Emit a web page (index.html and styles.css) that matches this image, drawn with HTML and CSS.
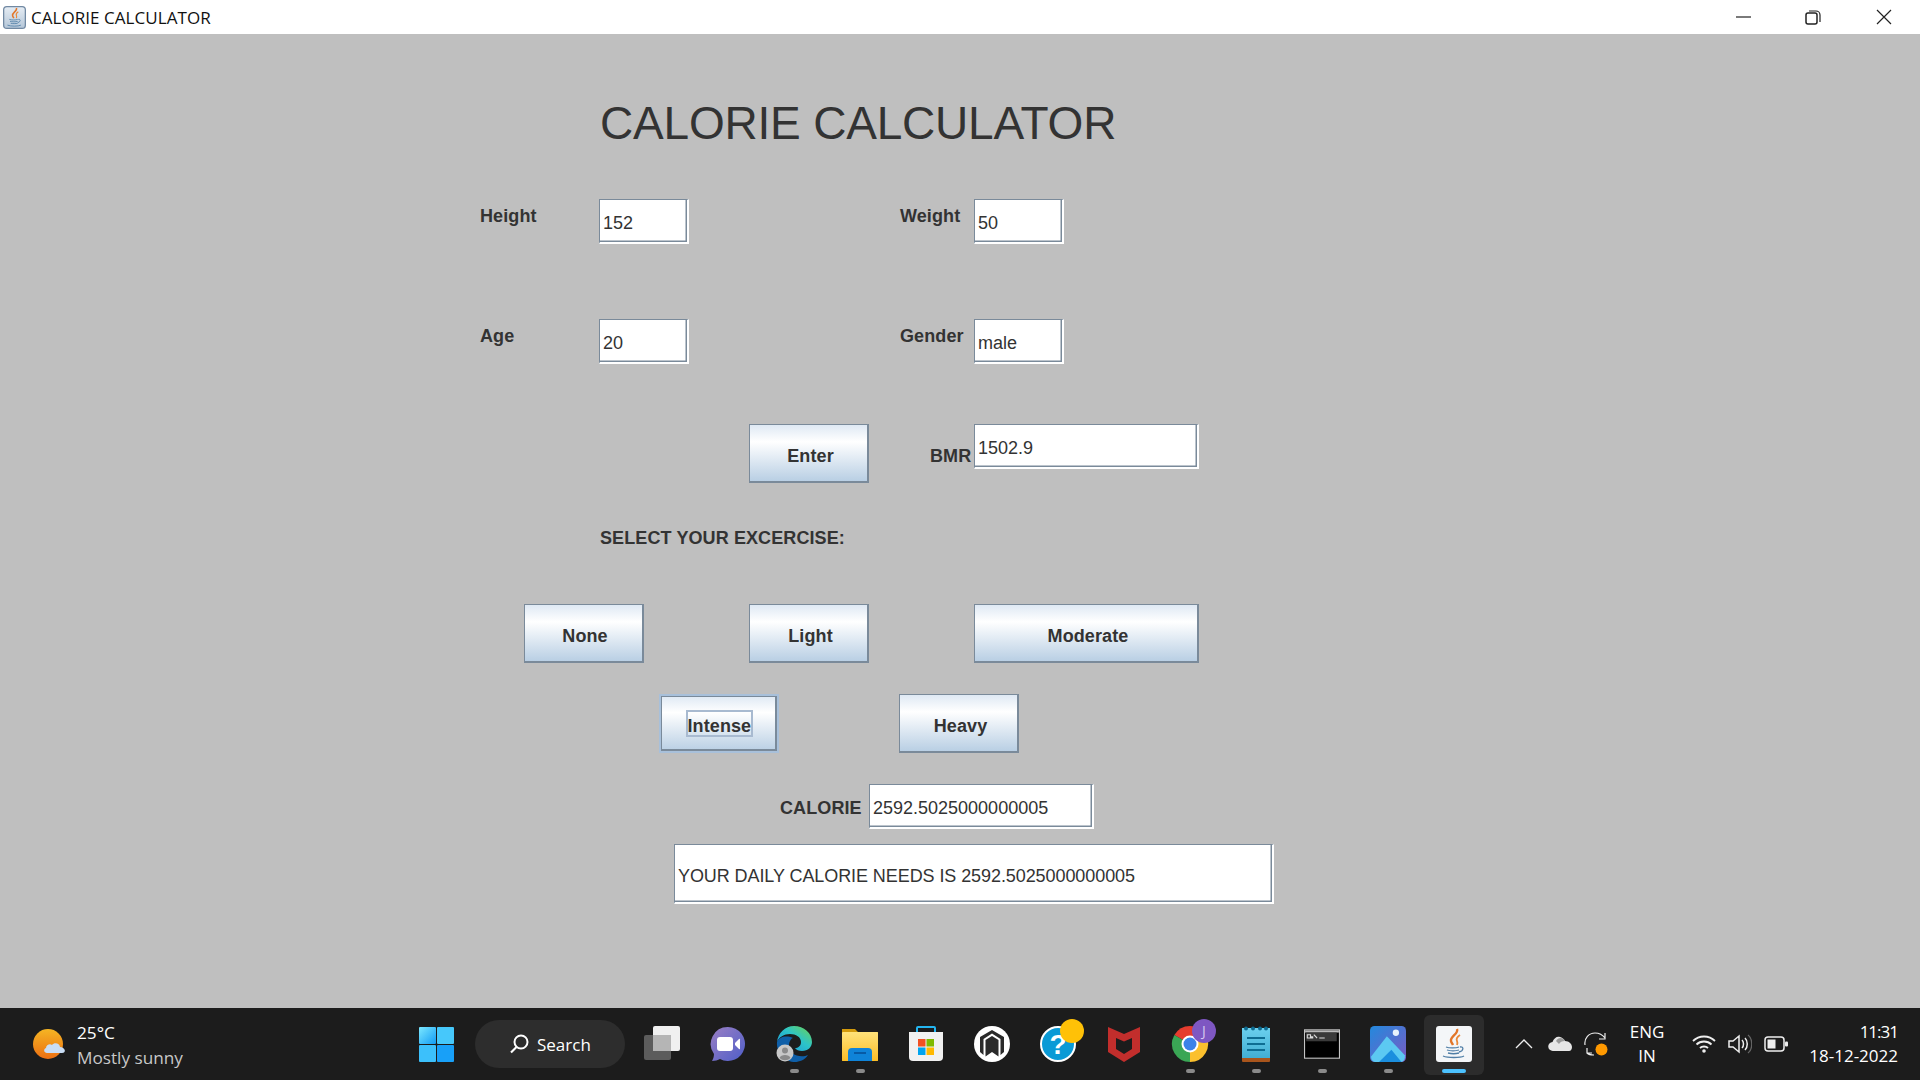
FILE: index.html
```html
<!DOCTYPE html>
<html lang="en">
    <head>
        <meta charset="utf-8">
        <meta name="viewport" content="width=device-width, initial-scale=1.0">
        <title>CALORIE CALCULATOR</title>
        <link rel="stylesheet" href="styles.css">
    </head>
    <body>
        <svg class="defs" width="0" height="0">
            <defs>
                <symbol id="java-mark" viewBox="0 0 36 36">
                    <path d="M21 3c2 5-7 7-6 12 .3 1.500 1.200 2.500 2 4" fill="none" stroke="#e2762a" stroke-width="2.400"/>
                    <path d="M24 9c-3 2-4 4-3 6 .5 1 .6 2 0 4" fill="none" stroke="#ea8a3c" stroke-width="1.800"/>
                    <path d="M10 21c3 1.200 10 1.200 13 0M11 24c3 1 9 1 12 0M12 27c3 .8 8 .8 11 0M7 30c5 2 17 2 21 0M24 21c4-1 4 4-1 5" fill="none" stroke="#4f7ea6" stroke-width="1.300"/>
                </symbol>
                <linearGradient id="sunGrad" x1="0" y1="0" x2="0" y2="1"><stop offset="0" stop-color="#f5b524"/><stop offset="1" stop-color="#ec6f12"/></linearGradient>
                <linearGradient id="logoGrad" x1="0" y1="0" x2="1" y2="1"><stop offset="0" stop-color="#7ce8ff"/><stop offset="1" stop-color="#129cf5"/></linearGradient>
                <linearGradient id="edgeTop" x1="0" y1="1" x2="1" y2="0"><stop offset="0" stop-color="#1b8fd6"/><stop offset="0.55" stop-color="#2cc4c9"/><stop offset="1" stop-color="#6fd34f"/></linearGradient>
                <linearGradient id="folderGrad" x1="0" y1="0" x2="0" y2="1"><stop offset="0" stop-color="#ffe27a"/><stop offset="1" stop-color="#fbbd27"/></linearGradient>
                <linearGradient id="meetGrad" x1="0" y1="0" x2="1" y2="1"><stop offset="0" stop-color="#9a7fc4"/><stop offset="1" stop-color="#4f5ec8"/></linearGradient>
                <linearGradient id="noteGrad" x1="0" y1="0" x2="0" y2="1"><stop offset="0" stop-color="#6bd0ee"/><stop offset="1" stop-color="#42aed2"/></linearGradient>
                <linearGradient id="photoGrad" x1="0" y1="0" x2="1" y2="1"><stop offset="0" stop-color="#2389dd"/><stop offset="1" stop-color="#7a5bc4"/></linearGradient>
                <linearGradient id="tileGrad" x1="0" y1="0" x2="0" y2="1"><stop offset="0" stop-color="#e6edf4"/><stop offset="1" stop-color="#b4c6d8"/></linearGradient>
            </defs>
        </svg>
        <div id="wrapper">
            <header class="titlebar">
                <svg class="app-icon" viewBox="0 0 36 36">
                    <rect x="1" y="1" width="34" height="34" rx="5" fill="url(#tileGrad)" stroke="#7189a3" stroke-width="2"/>
                    <use href="#java-mark" width="36" height="36"/>
                </svg>
                <span class="app-title">CALORIE CALCULATOR</span>
                <div class="win-controls">
                    <svg class="win-btn win-min" viewBox="0 0 16 16"><path d="M0 8h15" stroke="#222" stroke-width="1.200"/></svg>
                    <svg class="win-btn" viewBox="0 0 16 16"><rect x="1" y="4" width="11" height="11" rx="2" fill="none" stroke="#222" stroke-width="1.500"/><path d="M4 2h7a4 4 0 0 1 4 4v7" fill="none" stroke="#222" stroke-width="1.200"/></svg>
                    <svg class="win-btn" viewBox="0 0 16 16"><path d="M1 1l14 14M15 1L1 15" stroke="#222" stroke-width="1.200"/></svg>
                </div>
            </header>
            <main class="form">
                <h1 class="form-title">CALORIE CALCULATOR</h1>
                <div class="row row-first">
                    <label class="lbl lbl-left">Height</label>
                    <div class="field field-small">152</div>
                    <label class="lbl lbl-right">Weight</label>
                    <div class="field field-small">50</div>
                </div>
                <div class="row row-second">
                    <label class="lbl lbl-left">Age</label>
                    <div class="field field-small">20</div>
                    <label class="lbl lbl-right">Gender</label>
                    <div class="field field-small">male</div>
                </div>
                <div class="row row-enter">
                    <button class="btn btn-std">Enter</button>
                    <label class="lbl lbl-bmr">BMR</label>
                    <div class="field field-wide">1502.9</div>
                </div>
                <div class="select-label">SELECT YOUR EXCERCISE:</div>
                <div class="row row-levels">
                    <button class="btn btn-std btn-none">None</button>
                    <button class="btn btn-std btn-light">Light</button>
                    <button class="btn btn-wide">Moderate</button>
                </div>
                <div class="row row-levels2">
                    <button class="btn btn-focus"><span class="focus-rect">Intense</span></button>
                    <button class="btn btn-std btn-heavy">Heavy</button>
                </div>
                <div class="row row-calorie">
                    <label class="lbl lbl-calorie">CALORIE</label>
                    <div class="field field-calorie">2592.5025000000005</div>
                </div>
                <div class="row row-result">
                    <div class="field field-result">YOUR DAILY CALORIE NEEDS IS 2592.5025000000005</div>
                </div>
            </main>
            <footer class="taskbar">
                <div class="weather">
                    <svg class="weather-icon" viewBox="0 0 34 30">
                        <ellipse cx="15" cy="15" rx="15" ry="15" fill="url(#sunGrad)"/>
                        <path d="M14 24c-3 0-4-4-1-5 0-3 4-5 6-3 2-3 8-2 8 2 5 0 7 6 2 6z" fill="#c9ddf5"/>
                    </svg>
                    <div class="weather-text">
                        <div class="temp">25°C</div>
                        <div class="cond">Mostly sunny</div>
                    </div>
                </div>
                <svg class="start" viewBox="0 0 35 35">
                    <rect width="17" height="17" rx="1" fill="url(#logoGrad)"/>
                    <rect x="18" width="17" height="17" rx="1" fill="#46c8fb"/>
                    <rect y="18" width="17" height="17" rx="1" fill="#3cc0fb"/>
                    <rect x="18" y="18" width="17" height="17" rx="1" fill="#18a0f8"/>
                </svg>
                <div class="search">
                    <svg class="search-icon" viewBox="0 0 20 20"><circle cx="12" cy="8" r="6.500" fill="none" stroke="#fff" stroke-width="2"/><path d="M7.500 13L2 18.500" stroke="#fff" stroke-width="2.200"/></svg>
                    <span>Search</span>
                </div>
                <div class="apps">
                    <div class="app">
                        <svg viewBox="0 0 36 36"><rect x="0" y="9" width="27" height="25" rx="2" fill="#5c5c5c"/><rect x="9" y="0" width="27" height="25" rx="2" fill="#f0f0f0"/><rect x="9" y="9" width="18" height="16" fill="#b5b5b5"/></svg>
                    </div>
                    <div class="app">
                        <svg viewBox="0 0 36 36"><path d="M18 1a17 17 0 1 1-8 32c-2 1-5 2-8 2 1-2 2-4 2-7A17 17 0 0 1 18 1z" fill="url(#meetGrad)"/><rect x="7" y="11" width="16" height="14" rx="3" fill="#fff"/><path d="M25 17l4-4c.7-.6 1-.2 1 .5v9c0 .7-.4 1-1 .5l-4-4z" fill="#fff"/></svg>
                    </div>
                    <div class="app">
                        <svg viewBox="0 0 36 36">
                            <path d="M1 16C2 7 9 0 18 0c10 0 18 7 18 16 0 5-4 9-10 9-3 0-6-1-7-3 3 0 6-2 6-6 0-5-5-8-11-8C8 8 3 11 1 16z" fill="url(#edgeTop)"/>
                            <path d="M1 16C0 28 10 36 19 36c4 0 10-2 13-7-4 2-11 2-16-2-3-3-4-8-2-12 1-2 2-3 3-3C10 9 3 11 1 16z" fill="#0f5fa8"/>
                            <circle cx="9" cy="27" r="8.500" fill="#c8c8c8"/><circle cx="9" cy="24.500" r="3" fill="#8a8a8a"/><path d="M3.500 32c1-4 10-4 11 0a8 8 0 0 1-11 0z" fill="#8a8a8a"/>
                        </svg>
                        <i class="dot"></i>
                    </div>
                    <div class="app">
                        <svg viewBox="0 0 36 36">
                            <path d="M0 3h13l3 3h20v29H0z" fill="#d39a0c"/>
                            <rect y="6" width="36" height="29" rx="1" fill="url(#folderGrad)"/>
                            <path d="M6 35V26a4 4 0 0 1 4-4h16a4 4 0 0 1 4 4v9z" fill="#0f83d8"/>
                            <rect x="12" y="26" width="12" height="2" fill="#075aa5"/>
                        </svg>
                        <i class="dot"></i>
                    </div>
                    <div class="app">
                        <svg viewBox="0 0 36 36">
                            <path d="M9 7V2a1 1 0 0 1 1-1h16a1 1 0 0 1 1 1v5" fill="none" stroke="#23b5f0" stroke-width="2"/>
                            <path d="M1 6h34v25a4 4 0 0 1-4 4H5a4 4 0 0 1-4-4z" fill="#f1f1f1"/>
                            <rect x="10" y="13" width="7.500" height="7.500" fill="#f25022"/><rect x="18.500" y="13" width="7.500" height="7.500" fill="#7fba00"/>
                            <rect x="10" y="21.500" width="7.500" height="7.500" fill="#00a4ef"/><rect x="18.500" y="21.500" width="7.500" height="7.500" fill="#ffb900"/>
                        </svg>
                    </div>
                    <div class="app">
                        <svg viewBox="0 0 36 36">
                            <circle cx="18" cy="18" r="18" fill="#fff"/>
                            <path d="M18 4L6 11v15l3.500 3V13L18 7.500 26.500 13v16l3.500-3V11z" fill="#2a2a2a"/>
                            <path d="M11.500 14L18 10l6.500 4v16.500L18 26l-6.500 4.500z" fill="#2a2a2a"/>
                        </svg>
                    </div>
                    <div class="app">
                        <svg class="svg-over" viewBox="0 0 36 36">
                            <circle cx="18" cy="18" r="17" fill="#0a9ad6" stroke="#fff" stroke-width="2"/>
                            <text x="18" y="28" class="help-mark">?</text>
                            <circle cx="32" cy="5" r="12" fill="#ffc107"/>
                        </svg>
                    </div>
                    <div class="app">
                        <svg viewBox="0 0 32 36"><path d="M0 1l16 7 16-7v25l-16 10L0 26z" fill="#c22e2c"/><path d="M8 12l8 3.500 8-3.500v11l-8 5-8-5z" fill="#1c1c1c"/></svg>
                    </div>
                    <div class="app">
                        <svg class="svg-over" viewBox="0 0 36 36">
                            <path d="M18 18L33.600 9A18 18 0 0 0 2.400 9z" fill="#e53c2e"/>
                            <path d="M18 18L2.400 9A18 18 0 0 0 18 36z" fill="#3aa655"/>
                            <path d="M18 18L18 36A18 18 0 0 0 33.600 9z" fill="#fbc02d"/>
                            <circle cx="18" cy="18" r="8.500" fill="#fff"/><circle cx="18" cy="18" r="6.500" fill="#3b82e8"/>
                            <circle cx="32" cy="5" r="12" fill="#7e57c2"/>
                            <text x="32" y="10" class="badge-letter">J</text>
                        </svg>
                        <i class="dot"></i>
                    </div>
                    <div class="app">
                        <svg viewBox="0 0 28 36">
                            <rect y="2" width="28" height="34" rx="1" fill="#a9551c"/>
                            <rect y="2" width="28" height="30" fill="url(#noteGrad)"/>
                            <circle cx="4" cy="2.500" r="2" fill="#0e6d92"/><circle cx="11" cy="2.500" r="2" fill="#0e6d92"/><circle cx="18" cy="2.500" r="2" fill="#0e6d92"/><circle cx="24" cy="2.500" r="2" fill="#0e6d92"/>
                            <path d="M5 12h18M5 18h18M5 24h18" stroke="#0e6d92" stroke-width="2"/>
                        </svg>
                        <i class="dot"></i>
                    </div>
                    <div class="app">
                        <svg viewBox="0 0 33 27">
                            <rect x="0.500" y="0.500" width="32" height="26" fill="#000" stroke="#c4c4c4"/>
                            <rect x="1" y="1" width="31" height="2" fill="#bbb"/>
                            <rect x="2" y="3" width="28" height="8" fill="#3a3a3a"/>
                            <path d="M3 5h3v3H3zM7 7h1v1H7zM9 5l3 3M14 8h5" stroke="#ddd" stroke-width="1" fill="none"/>
                        </svg>
                        <i class="dot"></i>
                    </div>
                    <div class="app">
                        <svg viewBox="0 0 32 32">
                            <rect width="32" height="32" rx="4" fill="url(#photoGrad)"/>
                            <circle cx="23" cy="6" r="2.800" fill="#e8f2fc"/>
                            <path d="M1 27L15 9l16 17v2a4 4 0 0 1-4 4H5a4 4 0 0 1-4-4z" fill="#5cc9f2"/>
                            <path d="M8 32l11-11 9 11z" fill="#1b8ede"/>
                        </svg>
                        <i class="dot"></i>
                    </div>
                    <div class="app app-active">
                        <svg viewBox="0 0 36 36">
                            <rect width="36" height="36" rx="3" fill="#f4f6f8"/>
                            <use href="#java-mark" width="36" height="36"/>
                        </svg>
                        <i class="dot dot-active"></i>
                    </div>
                </div>
                <div class="tray">
                    <svg class="tray-chevron" viewBox="0 0 18 10"><path d="M1 9l8-8 8 8" fill="none" stroke="#eee" stroke-width="1.300"/></svg>
                    <svg class="tray-cloud" viewBox="0 0 24 16"><path d="M5 15a4.500 4.500 0 0 1-.5-9C6 2 9 0 12 1c2 .5 4 2 5 4 4 0 7 3 7 6 0 2-1 4-3 4z" fill="#e6e6e6"/><path d="M8 5c2-4 7-4 9 0-3 0-5 1-6 3-1-1-2-2-3-3z" fill="#9a9a9a"/></svg>
                    <svg class="tray-sync" viewBox="0 0 24 24">
                        <path d="M1 13C0 6 5 1 11 1c4 0 7 1 10 5M21 1v6h-6M8 21H3v-5M3 21c1 1 4 2 7 2" fill="none" stroke="#eee" stroke-width="1.200"/>
                        <circle cx="17.500" cy="17.500" r="6" fill="#f90"/>
                    </svg>
                    <div class="lang"><div>ENG</div><div>IN</div></div>
                    <svg class="tray-wifi" viewBox="0 0 24 18"><path d="M1 6c6-6 16-6 22 0M4.500 9.500c4-4 11-4 15 0M8 13c2-2 6-2 8 0" fill="none" stroke="#eee" stroke-width="1.800"/><circle cx="12" cy="16" r="1.800" fill="#eee"/></svg>
                    <svg class="tray-sound" viewBox="0 0 24 20"><path d="M1 7h4l6-5v16l-6-5H1z" fill="none" stroke="#eee" stroke-width="1.500"/><path d="M14 6c2 2 2 6 0 8M17 4c3 3 3 9 0 12" fill="none" stroke="#eee" stroke-width="1.500"/><path d="M20 1c5 4 5 14 0 18" fill="none" stroke="#666" stroke-width="1.300"/></svg>
                    <svg class="tray-battery" viewBox="0 0 24 16"><rect x="1" y="1" width="19" height="14" rx="3" fill="none" stroke="#eee" stroke-width="1.500"/><rect x="3.500" y="3.500" width="8" height="9" fill="#eee"/><rect x="21" y="5.500" width="3" height="5" rx="1" fill="#eee"/></svg>
                    <div class="clock"><div class="clock-time">11:31</div><div>18-12-2022</div></div>
                </div>
            </footer>
        </div>
    </body>
</html>
```

FILE: styles.css
```css
*{
    margin: 0;
    padding: 0;
    box-sizing: border-box;
}
body{
    background-color: #bfbfbf;
    font-family: "Liberation Sans", Arial, sans-serif;
    overflow: hidden;
}
.defs{
    position: absolute;
}
#wrapper{
    width: 1920px;
    height: 1080px;
    display: flex;
    flex-direction: column;
}

/* title bar */
.titlebar{
    height: 34px;
    flex: none;
    background-color: #fff;
    display: flex;
    align-items: center;
    padding-left: 3px;
}
.app-icon{
    width: 23px;
    height: 23px;
}
.app-title{
    margin-left: 5px;
    font-family: "Open Sans", sans-serif;
    font-size: 17px;
    letter-spacing: 0.05px;
    color: #111;
}
.win-controls{
    margin-left: auto;
    display: flex;
    gap: 55px;
    padding-right: 28px;
}
.win-btn{
    width: 16px;
    height: 16px;
}
.win-min{
    margin-right: -2px;
}

/* form */
.form{
    flex: 1;
    background-color: #bfbfbf;
    color: #333;
    font-size: 18px;
}
.form-title{
    margin: 62px 0 0 600px;
    height: 54px;
    font-size: 46px;
    line-height: 54px;
    font-weight: normal;
    letter-spacing: -0.2px;
}
.row{
    display: flex;
    align-items: flex-start;
}
.row-first{ margin-top: 49px; padding-left: 480px; }
.row-second{ margin-top: 75px; padding-left: 480px; }
.row-enter{ margin-top: 60px; padding-left: 749px; }
.row-levels{ margin-top: 57px; padding-left: 524px; }
.row-levels2{ margin-top: 31px; padding-left: 659px; }
.row-calorie{ margin-top: 31px; padding-left: 780px; }
.row-result{ margin-top: 15px; padding-left: 674px; }
.lbl{
    font-weight: bold;
    line-height: 20px;
    padding-top: 7px;
    letter-spacing: 0.1px;
}
.lbl-left{ width: 119px; }
.lbl-right{ width: 74px; margin-left: 211px; }
.lbl-bmr{ width: 44px; margin-left: 61px; padding-top: 22px; }
.lbl-calorie{ width: 89px; padding-top: 14px; }
.select-label{
    margin: 45px 0 -1px 600px;
    height: 20px;
    line-height: 20px;
    font-weight: bold;
    letter-spacing: 0.1px;
}
.field{
    height: 45px;
    background-color: #fff;
    border-style: solid;
    border-width: 1px 2px 2px 1px;
    border-color: #7a8a9a #fff #fff #7a8a9a;
    box-shadow: inset -1.500px -1.500px 0 #7a8a9a;
    padding: 2px 0 0 3px;
    line-height: 42px;
    white-space: nowrap;
}
.field-small{ width: 90px; }
.field-wide{ width: 225px; }
.field-calorie{ width: 225px; }
.field-result{ width: 600px; height: 60px; line-height: 59px; letter-spacing: -0.08px; }
.btn{
    height: 59px;
    font-family: inherit;
    font-size: 18px;
    font-weight: bold;
    letter-spacing: 0.1px;
    color: #333;
    padding: 6px 0 0 4px;
    border-style: solid;
    border-width: 1px 2px 2px 1px;
    border-color: #7a8a9a;
    background: linear-gradient(#dfe9f4, #fff 30%, #b9cfe4);
}
.btn-std{ width: 120px; }
.btn-wide{ width: 225px; margin-left: 105px; }
.btn-none{ padding-left: 3px; }
.btn-light{ margin-left: 105px; }
.btn-heavy{ margin-left: 120px; }
.btn-focus{
    width: 120px;
    padding: 0;
    border: 2px solid #a8c0da;
    box-shadow: inset 0 0 0 1px #7a8a9a, inset -1px -1px 0 1px #7a8a9a;
}
.focus-rect{
    display: block;
    width: 67px;
    height: 27px;
    margin: 0 auto;
    line-height: 28px;
    border: 2px solid #a8bad0;
    overflow: hidden;
}

/* taskbar */
.taskbar{
    height: 72px;
    flex: none;
    background-color: #1c1c1c;
    color: #fff;
    font-family: "Open Sans", sans-serif;
    display: flex;
    align-items: center;
}
.weather{
    width: 419px;
    flex: none;
    display: flex;
    align-items: center;
    padding-left: 33px;
}
.weather-icon{
    width: 34px;
    height: 30px;
}
.weather-text{
    margin-left: 10px;
    padding-top: 2px;
    font-size: 17.200px;
    line-height: 25px;
}
.cond{
    color: #c8c8c8;
}
.start{
    width: 35px;
    height: 35px;
    flex: none;
}
.search{
    width: 150px;
    height: 48px;
    flex: none;
    margin-left: 21px;
    border-radius: 24px;
    background-color: #2d2d2d;
    display: flex;
    align-items: center;
    padding-left: 34px;
    gap: 8px;
    font-size: 17px;
}
.search-icon{
    width: 20px;
    height: 20px;
}
.apps{
    margin-left: 4px;
    display: flex;
    flex: none;
}
.app{
    position: relative;
    width: 66px;
    height: 72px;
    display: flex;
    align-items: center;
    justify-content: center;
}
.app svg{
    width: 36px;
    height: 36px;
}
.app .svg-over{
    overflow: visible;
}
.app-active::before{
    content: "";
    position: absolute;
    left: 3px;
    top: 7px;
    width: 60px;
    height: 60px;
    border-radius: 6px;
    background-color: #2c2c2c;
}
.app-active svg{
    position: relative;
}
.dot{
    position: absolute;
    left: 29px;
    top: 61px;
    width: 9px;
    height: 4px;
    border-radius: 2px;
    background-color: #8a8a8a;
}
.dot-active{
    left: 21px;
    width: 24px;
    background-color: #4cc2ff;
}
.help-mark{
    font-family: "Liberation Sans", sans-serif;
    font-size: 28px;
    font-weight: bold;
    fill: #fff;
    text-anchor: middle;
}
.badge-letter{
    font-family: "Open Sans", sans-serif;
    font-size: 14px;
    fill: #d8c8f0;
    text-anchor: middle;
}
.tray{
    flex: 1;
    display: flex;
    align-items: center;
    padding-left: 28px;
    font-size: 17px;
    line-height: 24px;
}
.tray-chevron{ width: 18px; height: 10px; }
.tray-cloud{ width: 24px; height: 16px; margin-left: 15px; }
.tray-sync{ width: 24px; height: 24px; margin-left: 12px; }
.lang{ width: 40px; margin-left: 19px; text-align: center; }
.tray-wifi{ width: 24px; height: 18px; margin-left: 25px; }
.tray-sound{ width: 24px; height: 20px; margin-left: 12px; }
.tray-battery{ width: 24px; height: 16px; margin-left: 12px; }
.clock{
    margin-left: auto;
    padding-right: 22px;
    text-align: right;
}
.clock-time{
    letter-spacing: -1px;
}
```
